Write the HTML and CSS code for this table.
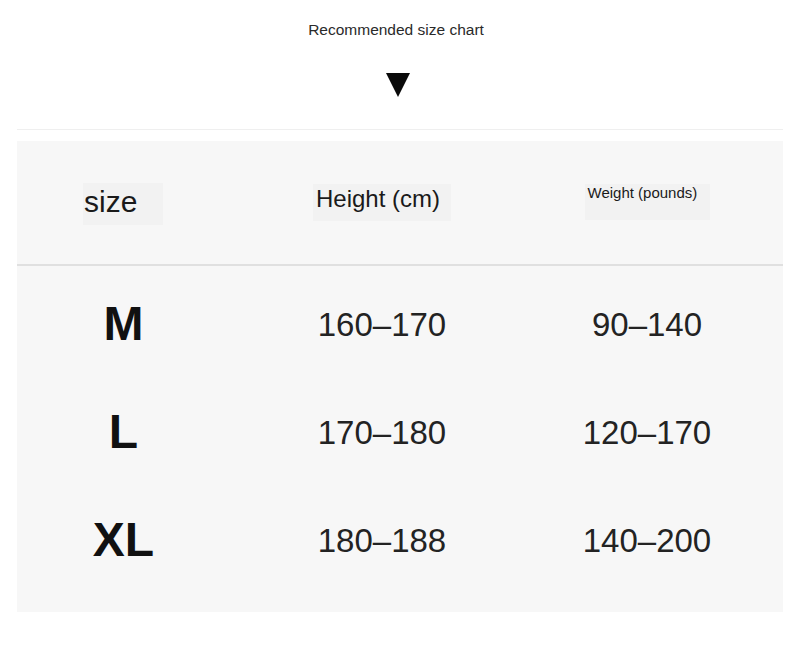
FILE: index.html
```html
<!DOCTYPE html>
<html lang="en">
<head>
<meta charset="utf-8">
<title>Recommended size chart</title>
<link rel="stylesheet" href="styles.css">
</head>
<body>
<div class="page">
  <div class="title">Recommended size chart</div>
  <div class="arrow-wrap"><span class="arrow"></span></div>
  <div class="rule"></div>
  <div class="panel">
    <div class="head">
      <div class="tag tag-size">size</div>
      <div class="tag tag-height">Height (cm)</div>
      <div class="tag tag-weight">Weight (pounds)</div>
    </div>
    <div class="rows">
      <div class="row">
        <div class="size">M</div>
        <div class="num">160–170</div>
        <div class="num">90–140</div>
      </div>
      <div class="row">
        <div class="size">L</div>
        <div class="num">170–180</div>
        <div class="num">120–170</div>
      </div>
      <div class="row">
        <div class="size">XL</div>
        <div class="num">180–188</div>
        <div class="num">140–200</div>
      </div>
    </div>
  </div>
</div>
</body>
</html>
```

FILE: styles.css
```css
html, body {
  margin: 0;
  padding: 0;
  background: #ffffff;
}

body {
  font-family: "Liberation Sans", Arial, sans-serif;
  color: #222;
}

.page {
  width: 800px;
  padding-top: 21px;
}

.title {
  text-align: center;
  font-size: 15.5px;
  line-height: 18px;
  color: #2a2a2a;
  margin-left: -8px;
}

.arrow-wrap {
  display: flex;
  justify-content: center;
  margin-top: 34px;
  margin-left: -4px;
}

.arrow {
  display: block;
  width: 0;
  height: 0;
  border-left: 12px solid transparent;
  border-right: 12px solid transparent;
  border-top: 24px solid #0a0a0a;
}

.rule {
  margin: 32px 17px 0;
  height: 1px;
  background: #efefef;
}

.panel {
  margin: 11px 17px 0;
  background: #f7f7f7;
  padding-bottom: 18px;
}

.head,
.row {
  display: grid;
  grid-template-columns: 212px 306px 224px;
  padding-right: 24px;
  align-items: center;
}

.head {
  height: 123px;
  border-bottom: 2px solid #e0e0e0;
}

.tag {
  justify-self: center;
  box-sizing: border-box;
  background: #f2f2f2;
  color: #1a1a1a;
  white-space: nowrap;
}

.tag-size {
  width: 80px;
  height: 42px;
  padding: 3px 0 0 1px;
  font-size: 30px;
  line-height: 31px;
  margin-top: 2px;
}

.tag-height {
  width: 138px;
  height: 37px;
  padding: 3px 0 0 3px;
  font-size: 24px;
  line-height: 24px;
}

.tag-weight {
  width: 125px;
  height: 36px;
  padding: 1px 0 0 3px;
  font-size: 15px;
  line-height: 15px;
  margin-top: -2px;
}

.rows {
  padding-top: 4px;
}

.row {
  height: 108px;
  text-align: center;
}

.size {
  font-size: 48px;
  font-weight: bold;
  color: #111;
  line-height: 1;
  margin-left: 1px;
}

.num {
  font-size: 33px;
  line-height: 1;
  color: #232323;
}
```
